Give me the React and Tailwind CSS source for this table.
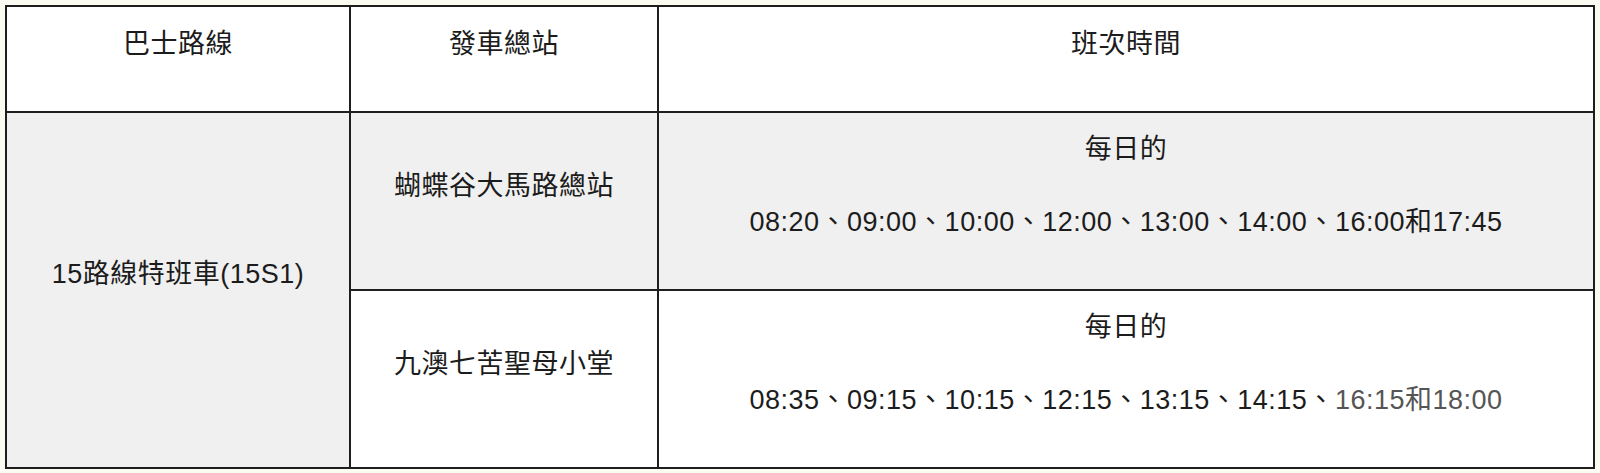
import React from "react";

const font = { fontFamily: '"Liberation Sans", "Noto Sans CJK TC", Arial, sans-serif' };

export default function App() {
  return (
    <div className="w-[1600px] h-[473px] bg-[#fbfbf2] p-[5px]" style={font}>
      <table className="w-[1590px] border-collapse table-fixed text-[27px] leading-[35px] tracking-[0.5px] text-[#1c1c1c]">
        <colgroup>
          <col className="w-[344px]" />
          <col className="w-[308px]" />
          <col />
        </colgroup>
        <tbody>
          <tr className="h-[106px] bg-white">
            <td className="border-2 border-[#1e1e1e] text-center align-middle">
              <div className="pb-[30px]">巴士路線</div>
            </td>
            <td className="border-2 border-[#1e1e1e] text-center align-middle">
              <div className="pb-[30px]">發車總站</div>
            </td>
            <td className="border-2 border-[#1e1e1e] text-center align-middle">
              <div className="pb-[30px]">班次時間</div>
            </td>
          </tr>
          <tr className="h-[178px]">
            <td rowSpan={2} className="border-2 border-[#1e1e1e] bg-[#f0f0f0] text-center align-middle">
              <div className="pb-[32px]">15路線特班車(15S1)</div>
            </td>
            <td className="border-2 border-[#1e1e1e] bg-[#f0f0f0] text-center align-middle">
              <div className="pb-[30px]">蝴蝶谷大馬路總站</div>
            </td>
            <td className="border-2 border-[#1e1e1e] bg-[#f0f0f0] text-center align-middle">
              <div className="flex flex-col gap-[38px] pb-[30px]">
                <div>每日的</div>
                <div>08:20、09:00、10:00、12:00、13:00、14:00、16:00和17:45</div>
              </div>
            </td>
          </tr>
          <tr className="h-[178px] bg-white">
            <td className="border-2 border-[#1e1e1e] text-center align-middle">
              <div className="pb-[30px]">九澳七苦聖母小堂</div>
            </td>
            <td className="border-2 border-[#1e1e1e] text-center align-middle">
              <div className="flex flex-col gap-[38px] pb-[30px]">
                <div>每日的</div>
                <div>
                  08:35、09:15、10:15、12:15、13:15、14:15、
                  <span className="text-[#555555]">16:15和18:00</span>
                </div>
              </div>
            </td>
          </tr>
        </tbody>
      </table>
    </div>
  );
}
